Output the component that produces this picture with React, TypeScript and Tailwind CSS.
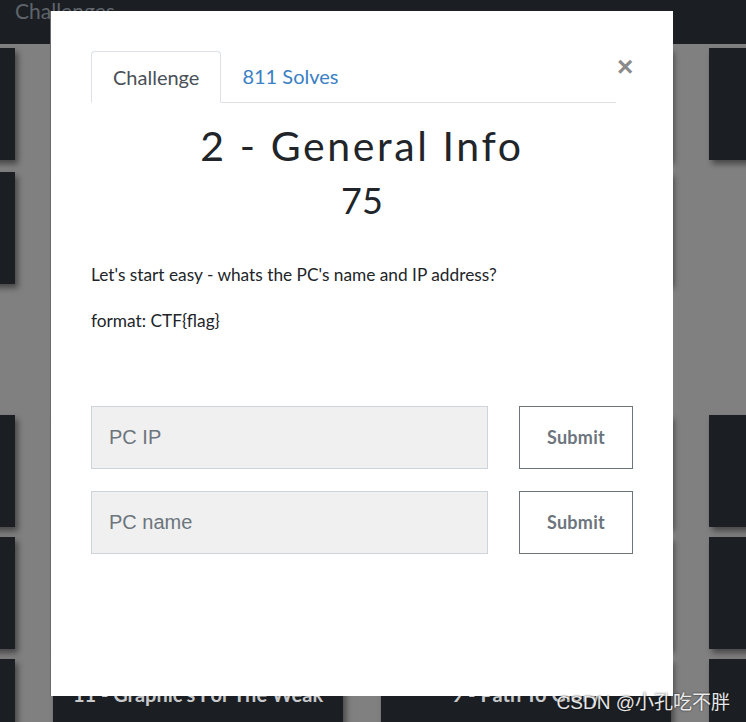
import React from "react";

const topRows = [
  ["", "", "", ""],
  ["", "", "", null],
];
const bottomRows = [
  ["", "", "", ""],
  ["", "", "", ""],
  ["", "11 - Graphic's For The Weak", "9 - Path To Glory", ""],
];

function ChallengeCard({ title }: { title: string | null }) {
  if (title === null) return <div className="h-[112px]" />;
  return (
    <div className="h-[112px] bg-[#1b1e22] shadow-[3px_4px_6px_rgba(0,0,0,0.45)] pt-[20px] text-center">
      <span className="text-[20px] font-bold text-[#c8cacc] [font-family:Lato,sans-serif]">{title}</span>
    </div>
  );
}

function Field({ placeholder }: { placeholder: string }) {
  return (
    <div className="flex gap-[31px]">
      <input
        placeholder={placeholder}
        className="h-[63px] flex-1 border border-[#ced4da] bg-[#f0f0f0] px-[17px] text-[20px] text-[#495057] outline-none placeholder:text-[#6c757d] [font-family:'Liberation_Sans',Arial,sans-serif]"
      />
      <button className="h-[63px] w-[114px] border border-[#6c757d] bg-white text-[18px] font-bold tracking-[0.3px] text-[#6c757d] [font-family:Lato,sans-serif]">
        Submit
      </button>
    </div>
  );
}

export default function App() {
  return (
    <div className="relative h-[722px] w-[746px] overflow-hidden bg-[#808080] [font-family:Lato,sans-serif]">
      <div className="h-[44px] bg-[#1b1e22] pl-[15px]">
        <span className="text-[21px] leading-[22px] text-[#5f656b]">Challenges</span>
      </div>

      <div className="ml-[-275px] pt-[4px]">
        <div className="grid grid-cols-[repeat(4,290px)] gap-x-[38px] gap-y-[12px]">
          {topRows.flat().map((t, i) => (
            <ChallengeCard key={`a${i}`} title={t} />
          ))}
        </div>
        <div className="mt-[131px] grid grid-cols-[repeat(4,290px)] gap-x-[38px] gap-y-[10px]">
          {bottomRows.flat().map((t, i) => (
            <ChallengeCard key={`b${i}`} title={t} />
          ))}
        </div>
      </div>

      {/* modal */}
      <div className="absolute left-[50px] top-[11px] h-[685px] w-[623px] border-l border-[#6a6a6a] bg-white px-[40px] pt-[40px]">
        <div className="flex items-start">
          <div className="flex flex-1 border-b border-[#dee2e6]">
            <div className="-mb-px rounded-t-[4px] border border-b-white border-[#dee2e6] bg-white px-[21px] pb-[11px] pt-[11px] text-[20px] leading-[28px] text-[#495057]">
              Challenge
            </div>
            <div className="px-[21px] pb-[11px] pt-[11px] text-[20px] leading-[28px] text-[#3b80c3]">811 Solves</div>
          </div>
          <button className="ml-[1px] mt-[2px] w-[16px] text-[28px] leading-none font-bold text-[#8a8a8a] [font-family:'Liberation_Sans',Arial,sans-serif]">
            ×
          </button>
        </div>

        <h1 className="mt-[19px] text-center text-[41px] font-normal leading-[48px] tracking-[2.6px] text-[#212529]">
          2 - General Info
        </h1>
        <div className="mt-[8px] text-center text-[36px] font-normal leading-[44px] text-[#212529]">75</div>

        <div className="mt-[41px] text-[17.3px] text-[#212529]">
          <p className="leading-[24px]">Let's start easy - whats the PC's name and IP address?</p>
          <p className="mt-[22px] leading-[24px]">format: CTF{"{flag}"}</p>
        </div>

        <div className="mt-[73px] flex flex-col gap-[22px]">
          <Field placeholder="PC IP" />
          <Field placeholder="PC name" />
        </div>
      </div>

      <div className="absolute right-[16px] top-[689px] text-[19px] text-white/90 [font-family:'Liberation_Sans','Noto_Sans_CJK_SC',sans-serif] [text-shadow:0_0_2px_rgba(0,0,0,0.8)]">
        CSDN @小孔吃不胖
      </div>
    </div>
  );
}
